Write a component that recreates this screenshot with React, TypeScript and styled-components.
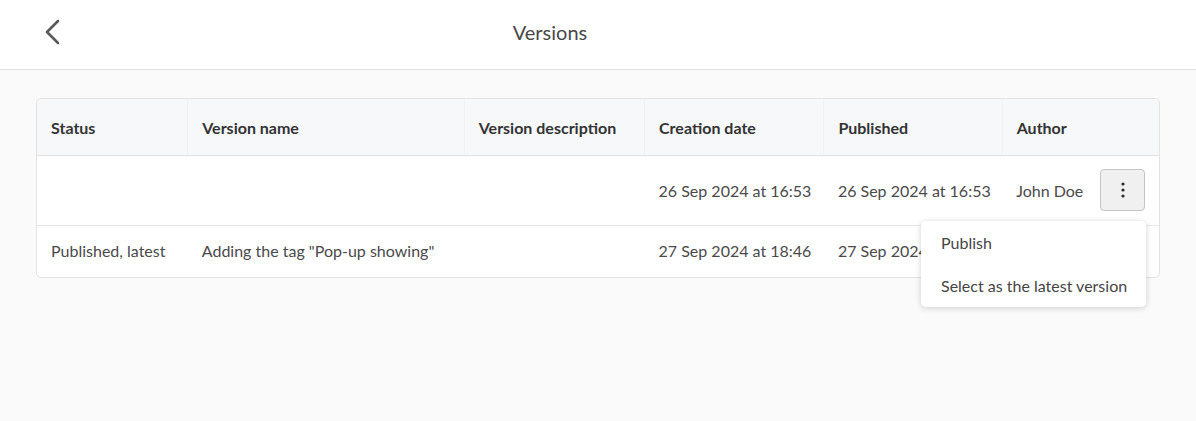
import React from "react";
import styled, { createGlobalStyle } from "styled-components";

const GlobalStyle = createGlobalStyle`
  html, body {
    margin: 0;
    padding: 0;
    background: #fafafa;
    font-family: "Lato", "Open Sans", sans-serif;
  }
`;

const Page = styled.div`
  width: 1196px;
  height: 421px;
  display: flex;
  flex-direction: column;
  background: #fafafa;
`;

const TopBar = styled.header`
  height: 69px;
  flex-shrink: 0;
  display: flex;
  align-items: center;
  background: #ffffff;
  border-bottom: 1px solid #e2e2e2;
`;

const BackButton = styled.button`
  width: 96px;
  height: 69px;
  padding: 0 0 6px 44px;
  border: none;
  background: none;
  cursor: pointer;
  display: flex;
  align-items: center;
`;

const Title = styled.h1`
  flex: 1;
  margin: 0 0 6px 0;
  padding-right: 192px;
  text-align: center;
  font-size: 20px;
  font-weight: 400;
  color: #474747;
`;

const Content = styled.main`
  padding: 28px 36px 0 36px;
`;

const Card = styled.div`
  position: relative;
  border: 1px solid #e3e3e3;
  border-radius: 5px;
  background: #ffffff;
`;

const Table = styled.table`
  width: 100%;
  border-collapse: collapse;
  table-layout: fixed;
`;

const HeadCell = styled.th<{ $w: number }>`
  width: ${(p) => p.$w}px;
  height: 56px;
  padding: 0 14px;
  text-align: left;
  font-size: 16px;
  font-weight: 700;
  color: #333333;
  background: #f7f8fa;
  border-bottom: 1px solid #e3e3e3;
  border-left: 1px solid #f1f2f4;
  white-space: nowrap;
  &:first-child {
    border-left: none;
    border-top-left-radius: 5px;
  }
  &:last-child {
    border-top-right-radius: 5px;
  }
`;

const Row = styled.tr<{ $tall?: boolean; $divider?: boolean }>`
  height: ${(p) => (p.$tall ? 70 : 51)}px;
  border-top: ${(p) => (p.$divider ? "1px solid #e6e6e6" : "none")};
`;

const Cell = styled.td`
  padding: 0 14px 1px 14px;
  font-size: 16px;
  color: #4a4a4a;
  white-space: nowrap;
  overflow: visible;
`;

const AuthorWrap = styled.div`
  display: flex;
  align-items: center;
  justify-content: space-between;
`;

const KebabButton = styled.button`
  width: 45px;
  height: 42px;
  border: 1px solid #c4c4c4;
  border-radius: 4px;
  background: #f0f0f0;
  display: flex;
  align-items: center;
  justify-content: center;
  cursor: pointer;
`;

const Menu = styled.ul`
  position: absolute;
  top: 122px;
  left: 884px;
  width: 225px;
  margin: 0;
  padding: 0;
  list-style: none;
  background: #ffffff;
  border-radius: 5px;
  box-shadow: 0 1px 6px rgba(0, 0, 0, 0.18);
`;

const MenuItem = styled.li`
  height: 43px;
  padding: 0 20px;
  display: flex;
  align-items: center;
  font-size: 16px;
  color: #454545;
  cursor: pointer;
  white-space: nowrap;
`;

const columns = [
  { label: "Status", w: 122 },
  { label: "Version name", w: 247 },
  { label: "Version description", w: 151 },
  { label: "Creation date", w: 150 },
  { label: "Published", w: 149 },
  { label: "Author", w: 128 },
];

const App: React.FC = () => {
  return (
    <>
      <GlobalStyle />
      <Page>
        <TopBar>
          <BackButton aria-label="Back">
            <svg width="18" height="28" viewBox="0 0 18 28">
              <polyline
                points="14,3 3,14 14,25"
                fill="none"
                stroke="#595959"
                strokeWidth="2.6"
                strokeLinecap="round"
                strokeLinejoin="round"
              />
            </svg>
          </BackButton>
          <Title>Versions</Title>
        </TopBar>
        <Content>
          <Card>
            <Table>
              <thead>
                <tr>
                  {columns.map((c) => (
                    <HeadCell key={c.label} $w={c.w}>
                      {c.label}
                    </HeadCell>
                  ))}
                </tr>
              </thead>
              <tbody>
                <Row $tall>
                  <Cell />
                  <Cell />
                  <Cell />
                  <Cell>26 Sep 2024 at 16:53</Cell>
                  <Cell>26 Sep 2024 at 16:53</Cell>
                  <Cell>
                    <AuthorWrap>
                      John Doe
                      <KebabButton aria-label="More actions">
                        <svg width="4" height="16" viewBox="0 0 4 16">
                          <circle cx="2" cy="2" r="1.6" fill="#2b2b2b" />
                          <circle cx="2" cy="8" r="1.6" fill="#2b2b2b" />
                          <circle cx="2" cy="14" r="1.6" fill="#2b2b2b" />
                        </svg>
                      </KebabButton>
                    </AuthorWrap>
                  </Cell>
                </Row>
                <Row $divider>
                  <Cell>Published, latest</Cell>
                  <Cell>Adding the tag "Pop-up showing"</Cell>
                  <Cell />
                  <Cell>27 Sep 2024 at 18:46</Cell>
                  <Cell>27 Sep 2024 at 18:46</Cell>
                  <Cell>John Doe</Cell>
                </Row>
              </tbody>
            </Table>
            <Menu>
              <MenuItem>Publish</MenuItem>
              <MenuItem>Select as the latest version</MenuItem>
            </Menu>
          </Card>
        </Content>
      </Page>
    </>
  );
};

export default App;
